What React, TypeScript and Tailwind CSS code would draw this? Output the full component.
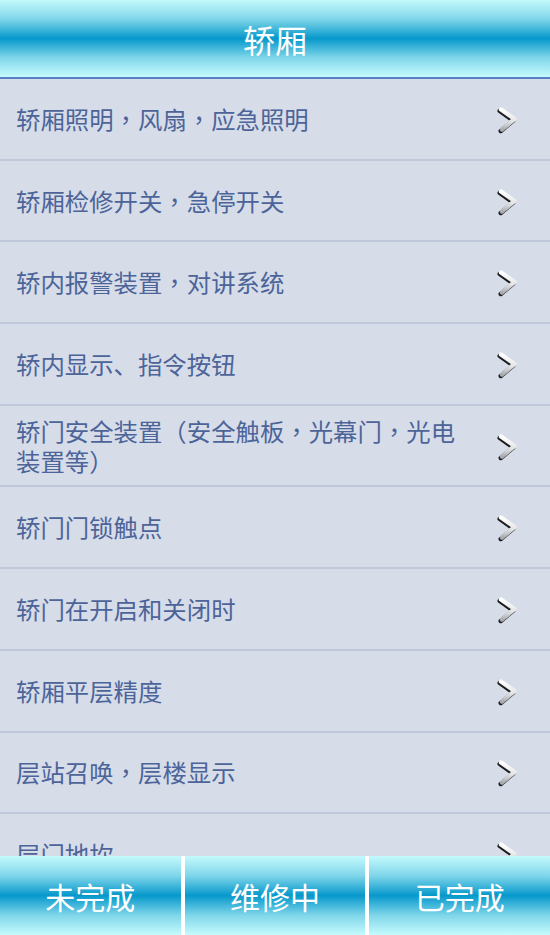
import React from "react";

const items = [
  "轿厢照明，风扇，应急照明",
  "轿厢检修开关，急停开关",
  "轿内报警装置，对讲系统",
  "轿内显示、指令按钮",
  "轿门安全装置（安全触板，光幕门，光电装置等）",
  "轿门门锁触点",
  "轿门在开启和关闭时",
  "轿厢平层精度",
  "层站召唤，层楼显示",
  "层门地坎",
];

const font = { fontFamily: '"Noto Sans CJK SC", "Noto Sans", sans-serif' };

function Chevron() {
  return (
    <svg width="26" height="30" viewBox="0 0 26 30" className="shrink-0">
      <defs>
        <linearGradient id="chg" x1="0" y1="0" x2="0" y2="1">
          <stop offset="0" stopColor="#ffffff" />
          <stop offset="0.6" stopColor="#e4e4e6" />
          <stop offset="1" stopColor="#a9abb0" />
        </linearGradient>
      </defs>
      <path
        d="M6 5.5 L19.5 15 L7 25.5"
        fill="none"
        stroke="#1c1c1c"
        strokeWidth="4.6"
        strokeLinecap="round"
        strokeLinejoin="round"
        transform="translate(-1.2 1.4)"
      />
      <path
        d="M6 5.5 L19.5 15 L7 25.5"
        fill="none"
        stroke="url(#chg)"
        strokeWidth="4.4"
        strokeLinecap="round"
        strokeLinejoin="round"
      />
    </svg>
  );
}

function Label({ text }: { text: string }) {
  const parts = text.split(/(，)/);
  return (
    <>
      {parts.map((p, i) =>
        p === "，" ? (
          <span key={i} className="font-['Noto_Sans_CJK_TC',sans-serif]">
            ，
          </span>
        ) : (
          <React.Fragment key={i}>{p}</React.Fragment>
        )
      )}
    </>
  );
}

export default function App() {
  return (
    <div className="w-[550px] h-[935px] flex flex-col bg-[#d6dde9] overflow-hidden" style={font}>
      <div className="h-[77px] shrink-0 flex items-center justify-center bg-[linear-gradient(to_bottom,#c4f9fc_0%,#7fd6ea_25%,#0698cb_50%,#7fd6ea_75%,#c6fbfd_100%)]">
        <span className="text-white text-[32px] leading-none">轿厢</span>
      </div>
      <div className="h-[2px] shrink-0 bg-[#5b7fc6]" />
      <div className="flex-1 overflow-hidden">
        {items.map((t, i) => (
          <div
            key={i}
            className="h-[81.7px] shrink-0 flex items-center justify-between pl-[16px] pr-[29px] border-b-2 border-[#c0c9da]"
          >
            <span className="w-[450px] text-[24.4px] leading-[30px] text-[#4d6499]">
              <Label text={t} />
            </span>
            <Chevron />
          </div>
        ))}
      </div>
      <div className="h-[79px] shrink-0 flex gap-[4px] bg-white">
        {["未完成", "维修中", "已完成"].map((t) => (
          <div
            key={t}
            className="flex-1 flex items-center justify-center bg-[linear-gradient(to_bottom,#c4f9fc_0%,#7fd6ea_25%,#0698cb_50%,#7fd6ea_75%,#c6fbfd_100%)]"
          >
            <span className="text-white text-[30px] leading-none">{t}</span>
          </div>
        ))}
      </div>
    </div>
  );
}
